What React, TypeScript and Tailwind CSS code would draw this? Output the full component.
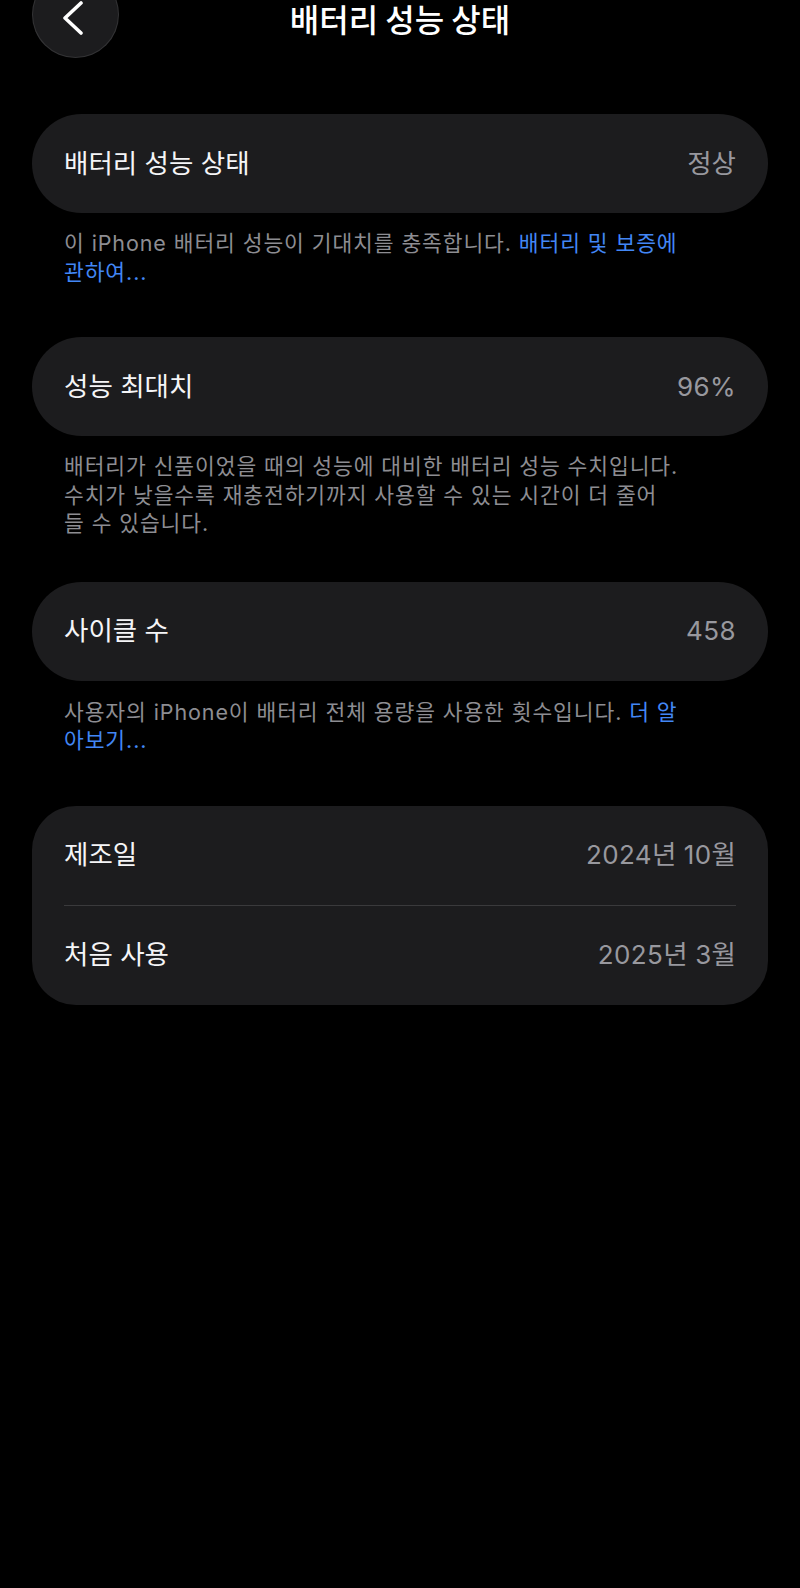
import React from "react";

function Num({ children }: { children: React.ReactNode }) {
  return <span className="text-[26px] tracking-[0.4px]">{children}</span>;
}

function Row({ label, value }: { label: string; value: React.ReactNode }) {
  return (
    <div className="flex h-[99px] items-center justify-between px-8">
      <span className="text-[26.5px] text-[#f5f5f7]">{label}</span>
      <span className="text-[26.5px] text-[#98989e]">{value}</span>
    </div>
  );
}

export default function App() {
  return (
    <div className="flex min-h-[1588px] w-full flex-col bg-black px-8 font-['Inter','Noto_Sans_CJK_KR',sans-serif] text-white">
      {/* Header */}
      <div className="-mt-[29px] grid grid-cols-[87px_1fr_87px] items-center">
        <button className="flex h-[87px] w-[87px] items-center justify-center rounded-full border border-white/10 bg-[#1c1c1e]">
          <svg width="24" height="36" viewBox="0 0 24 36" fill="none" className="-ml-[4px] mt-[4px]">
            <path
              d="M19 4 L3 19 L19 34"
              stroke="white"
              strokeWidth="3.6"
              strokeLinecap="round"
              strokeLinejoin="round"
            />
          </svg>
        </button>
        <h1 className="mt-[6px] text-center font-['Noto_Sans_CJK_KR',sans-serif] text-[32px] font-medium leading-[28px]">
          배터리 성능 상태
        </h1>
        <div />
      </div>

      {/* Card 1 */}
      <div className="mt-[56px] rounded-full bg-[#1c1c1e]">
        <Row label="배터리 성능 상태" value="정상" />
      </div>
      <p className="mt-[16px] whitespace-nowrap px-8 text-[21.5px] leading-[28.5px] tracking-[0.9px] text-[#8d8d92]">
        이 iPhone 배터리 성능이 기대치를 충족합니다.{" "}
        <span className="text-[#4287f5]">
          배터리 및 보증에
          <br />
          관하여...
        </span>
      </p>

      {/* Card 2 */}
      <div className="mt-[51px] rounded-full bg-[#1c1c1e]">
        <Row label="성능 최대치" value={<Num>96%</Num>} />
      </div>
      <p className="mt-[16px] whitespace-nowrap px-8 text-[21.5px] leading-[28.5px] tracking-[0.9px] text-[#8d8d92]">
        배터리가 신품이었을 때의 성능에 대비한 배터리 성능 수치입니다.
        <br />
        수치가 낮을수록 재충전하기까지 사용할 수 있는 시간이 더 줄어
        <br />
        들 수 있습니다.
      </p>

      {/* Card 3 */}
      <div className="mt-[44px] rounded-full bg-[#1c1c1e]">
        <Row label="사이클 수" value={<Num>458</Num>} />
      </div>
      <p className="mt-[17px] whitespace-nowrap px-8 text-[21.5px] leading-[28.5px] tracking-[0.9px] text-[#8d8d92]">
        사용자의 iPhone이 배터리 전체 용량을 사용한 횟수입니다.{" "}
        <span className="text-[#4287f5]">
          더 알
          <br />
          아보기...
        </span>
      </p>

      {/* Card 4 */}
      <div className="mt-[51px] rounded-[44px] bg-[#1c1c1e]">
        <Row
          label="제조일"
          value={
            <>
              <Num>2024</Num>년 <Num>10</Num>월
            </>
          }
        />
        <div className="mx-8 h-px bg-[#3a3a3c]" />
        <Row
          label="처음 사용"
          value={
            <>
              <Num>2025</Num>년 <Num>3</Num>월
            </>
          }
        />
      </div>
    </div>
  );
}
